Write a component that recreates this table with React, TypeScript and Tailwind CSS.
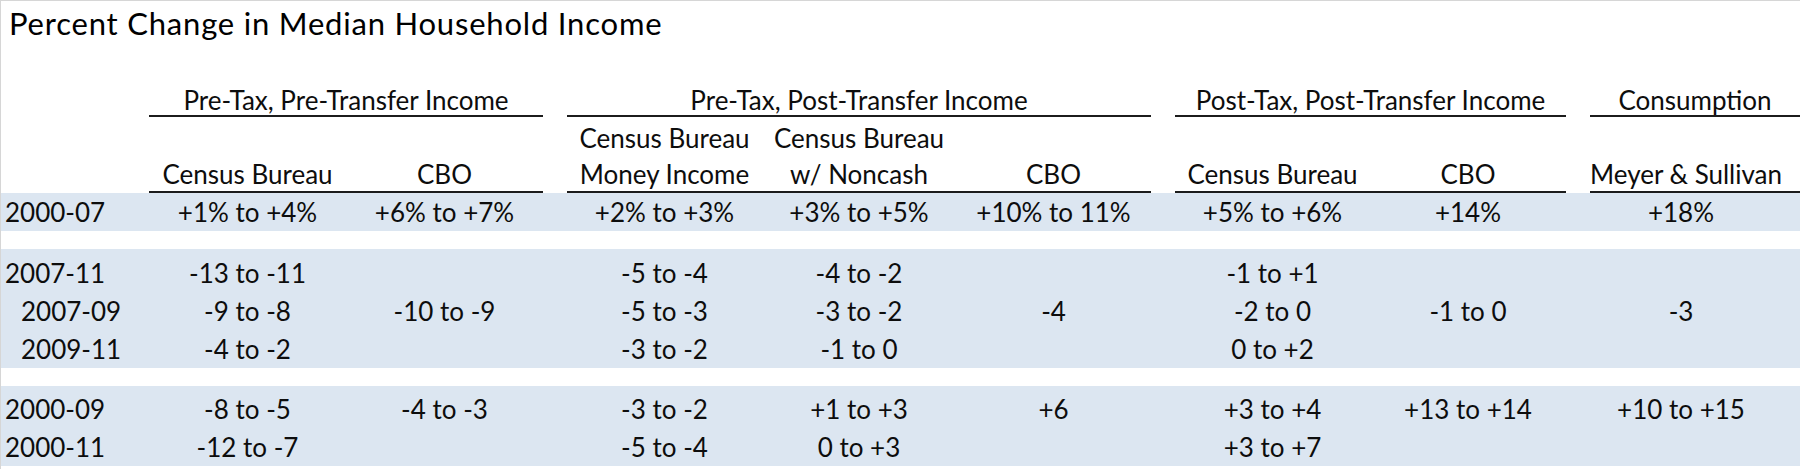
import React from 'react'

// one grid template shared by every row: label, 2 + 3 + 2 + 1 data columns, 24px gaps between groups
const grid =
  'grid grid-cols-[148px_197px_197px_24px_195px_194px_195px_24px_195px_196px_24px_210px]'

type Row = { label: string; indent?: boolean; cells: string[] }

const bands: { pad: string; rows: Row[] }[] = [
  {
    pad: 'pt-0',
    rows: [
      {
        label: '2000-07',
        cells: ['+1% to +4%', '+6% to +7%', '+2% to +3%', '+3% to +5%', '+10% to 11%', '+5% to +6%', '+14%', '+18%'],
      },
    ],
  },
  {
    pad: 'pt-[5px]',
    rows: [
      { label: '2007-11', cells: ['-13 to -11', '', '-5 to -4', '-4 to -2', '', '-1 to +1', '', ''] },
      { label: '2007-09', indent: true, cells: ['-9 to -8', '-10 to -9', '-5 to -3', '-3 to -2', '-4', '-2 to 0', '-1 to 0', '-3'] },
      { label: '2009-11', indent: true, cells: ['-4 to -2', '', '-3 to -2', '-1 to 0', '', '0 to +2', '', ''] },
    ],
  },
  {
    pad: 'pt-[4px]',
    rows: [
      { label: '2000-09', cells: ['-8 to -5', '-4 to -3', '-3 to -2', '+1 to +3', '+6', '+3 to +4', '+13 to +14', '+10 to +15'] },
      { label: '2000-11', cells: ['-12 to -7', '', '-5 to -4', '0 to +3', '', '+3 to +7', '', ''] },
    ],
  },
]

function DataRow({ row }: { row: Row }) {
  const [a, b, c, d, e, f, g, k] = row.cells
  return (
    <div className={`${grid} h-[38px] leading-[38px]`}>
      <div className={row.indent ? 'pl-[20px]' : 'pl-[4px]'}>{row.label}</div>
      <div className="text-center">{a}</div>
      <div className="text-center">{b}</div>
      <div />
      <div className="text-center">{c}</div>
      <div className="text-center">{d}</div>
      <div className="text-center">{e}</div>
      <div />
      <div className="text-center">{f}</div>
      <div className="text-center">{g}</div>
      <div />
      <div className="text-center pr-[28px]">{k}</div>
    </div>
  )
}

function SubHead({ top, bottom, extra = '' }: { top?: string; bottom: string; extra?: string }) {
  return (
    <div className={`h-[76px] pt-[3px] leading-[36px] text-center border-b-2 border-[#1c1c1c] ${extra}`}>
      <div className="h-[36px] whitespace-nowrap">{top ?? ''}</div>
      <div className="whitespace-nowrap">{bottom}</div>
    </div>
  )
}

export default function App() {
  return (
    <div className="w-[1800px] h-[469px] overflow-hidden bg-white border-t border-l border-[#d6d6d6] text-[26px] text-[#0d0d0d] font-['Lato','Open_Sans',sans-serif]">
      <div className="h-[79px] pl-[8px] text-[31px] leading-[44px] tracking-[0.8px] text-black">
        Percent Change in Median Household Income
      </div>

      <div className={`${grid} h-[37px]`}>
        <div />
        <div className="col-span-2 pt-[6px] leading-[29px] text-center border-b-2 border-[#1c1c1c]">
          Pre-Tax, Pre-Transfer Income
        </div>
        <div />
        <div className="col-span-3 pt-[6px] leading-[29px] text-center border-b-2 border-[#1c1c1c]">
          Pre-Tax, Post-Transfer Income
        </div>
        <div />
        <div className="col-span-2 pt-[6px] leading-[29px] text-center border-b-2 border-[#1c1c1c]">
          Post-Tax, Post-Transfer Income
        </div>
        <div />
        <div className="pt-[6px] leading-[29px] text-center border-b-2 border-[#1c1c1c]">Consumption</div>
      </div>

      <div className={grid}>
        <div />
        <SubHead bottom="Census Bureau" />
        <SubHead bottom="CBO" />
        <div />
        <SubHead top="Census Bureau" bottom="Money Income" />
        <SubHead top="Census Bureau" bottom="w/ Noncash" />
        <SubHead bottom="CBO" />
        <div />
        <SubHead bottom="Census Bureau" />
        <SubHead bottom="CBO" />
        <div />
        <SubHead bottom="Meyer & Sullivan" extra="pr-[28px]" />
      </div>

      <div className="flex flex-col gap-[18px]">
        {bands.map((band, i) => (
          <div key={i} className={`bg-[#dce6f1] ${band.pad}`}>
            {band.rows.map(r => (
              <DataRow key={r.label} row={r} />
            ))}
          </div>
        ))}
      </div>
    </div>
  )
}
